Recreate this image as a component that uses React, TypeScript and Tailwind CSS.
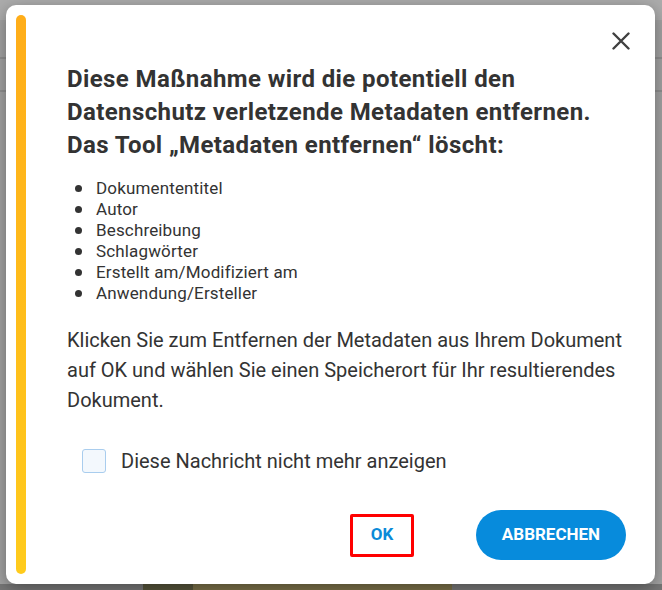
import React from "react";

const items = [
  "Dokumententitel",
  "Autor",
  "Beschreibung",
  "Schlagwörter",
  "Erstellt am/Modifiziert am",
  "Anwendung/Ersteller",
];

export default function App() {
  return (
    <div className="relative w-[662px] h-[590px] overflow-hidden bg-[#a2a2a2] font-['Roboto',_'Liberation_Sans',_sans-serif]">
      {/* background application behind the overlay */}
      <div className="absolute inset-0 flex flex-col">
        <div className="h-[20px] bg-[#acacac]" />
        <div className="h-[37px]" />
        <div className="h-[2px] bg-[#8f8f8f]" />
        <div className="h-[31px]" />
        <div className="h-[2px] bg-[#8f8f8f]" />
        <div className="flex-1" />
        <div className="h-[6px] bg-[#767676] flex">
          <div className="ml-[143px] w-[50px] bg-[#55533a]" />
          <div className="w-[259px] bg-[#7a7048]" />
        </div>
      </div>

      {/* dialog */}
      <div className="relative z-10 ml-[6px] mt-[5px] w-[649px] h-[579px] rounded-[10px] bg-white shadow-[0_4px_16px_rgba(0,0,0,0.35)] flex">
        <div className="ml-[10px] my-[10px] w-[10px] rounded-full bg-gradient-to-b from-[#ffad19] to-[#ffcb1c]" />
        <div className="flex-1 flex flex-col pl-[41px] pr-[29px] pt-[27px] pb-[24px] text-[#333333]">
          <div className="flex justify-end -mr-[4px]">
            <button className="w-[18px] h-[18px] flex items-center justify-center" aria-label="Schließen">
              <svg width="18" height="18" viewBox="0 0 18 18">
                <path d="M1.5 1.5 L16.5 16.5 M16.5 1.5 L1.5 16.5" stroke="#404040" strokeWidth="2.4" strokeLinecap="round" />
              </svg>
            </button>
          </div>
          <h2 className="mt-[13px] text-[24px] leading-[33px] font-bold tracking-[0.4px] text-[#333333]">
            Diese Maßnahme wird die potentiell den Datenschutz verletzende Metadaten entfernen. Das Tool „Metadaten entfernen“ löscht:
          </h2>
          <ul className="mt-[16px] flex flex-col">
            {items.map((t) => (
              <li key={t} className="flex items-center text-[17px] leading-[21px] tracking-[0.15px]">
                <span className="ml-[8px] w-[7px] h-[7px] rounded-full bg-[#333333]" />
                <span className="ml-[14px]">{t}</span>
              </li>
            ))}
          </ul>
          <p className="mt-[21px] text-[20px] leading-[30px]">
            Klicken Sie zum Entfernen der Metadaten aus Ihrem Dokument auf OK und wählen Sie einen Speicherort für Ihr resultierendes Dokument.
          </p>
          <label className="mt-[34px] ml-[15px] flex items-center">
            <span className="w-[24px] h-[24px] rounded-[3px] border-[1.5px] border-[#a9cdee] bg-[#f3f8fd]" />
            <span className="ml-[15px] text-[20px] leading-[24px]">Diese Nachricht nicht mehr anzeigen</span>
          </label>
          <div className="mt-auto flex items-center justify-end">
            <button className="w-[64px] h-[43px] border-[3px] border-[#ff0000] rounded-[2px] text-[17px] font-bold text-[#0a8ad8] flex items-center justify-center">
              OK
            </button>
            <button className="ml-[62px] w-[150px] h-[50px] rounded-full bg-[#078bdc] text-white text-[17px] font-bold flex items-center justify-center">
              ABBRECHEN
            </button>
          </div>
        </div>
      </div>
    </div>
  );
}
